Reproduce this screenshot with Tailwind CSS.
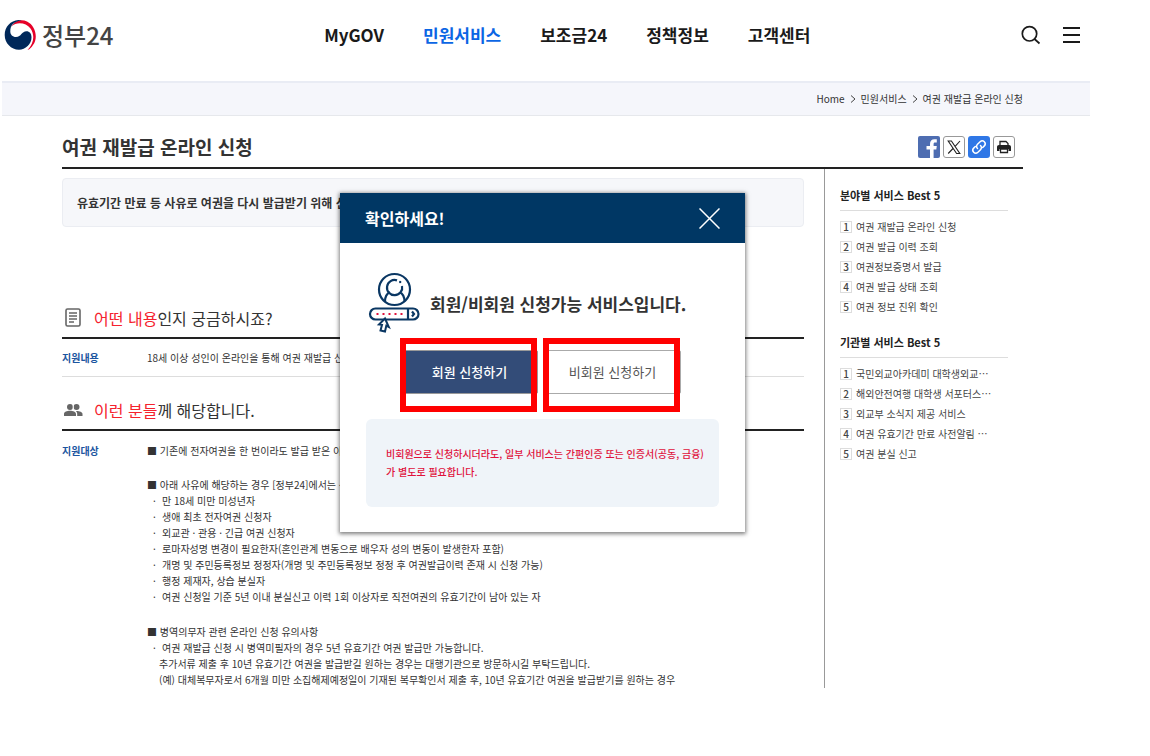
<!DOCTYPE html>
<html lang="ko">
<head>
    <meta charset="UTF-8">
    <meta name="viewport" content="width=device-width, initial-scale=1.0">
    <title>여권 재발급 온라인 신청 | 정부24</title>
    <script src="https://cdn.jsdelivr.net/npm/@tailwindcss/browser@4"></script>
</head>
<body class="bg-white text-[#333] font-['Noto_Sans_CJK_KR',sans-serif] text-[10px] leading-4">
    <div class="relative ml-[2px] mr-[60px]">
        <!-- header -->
        <header class="flex items-center justify-between h-[81px] pb-[11px] pl-[2px] pr-[9px]">
            <a href="#" class="flex items-center gap-[6px]">
                <svg class="w-8 h-8" viewBox="0 0 32 32" aria-hidden="true">
                    <path d="M7.500 7.500C11 1 18 0 23 2.500C31.500 6.500 34.500 19 29 26C27.500 28.500 26 30 23.500 31C30 24.500 31 16 26.500 9.500C22 3.500 12.500 2.500 7.500 7.500Z" fill="#e60028"/>
                    <path d="M14.500 1C6.500 1.500 0.700 8 0.700 16C0.700 24 7 30.700 15 30.700C21.500 30.700 27.500 25 27.500 18.500C27.500 14.500 25.500 12.300 22.500 12.300C17.500 12.300 17.500 18 12 18C8.500 18 6.300 15.500 6.300 12.500C6.300 6.500 9.500 2.500 18 1.300C17 1 16 1 14.500 1Z" fill="#00285a"/>
                </svg>
                <span class="text-[24px] leading-8 font-medium text-[#444]">정부24</span>
            </a>
            <nav class="flex gap-[39px] text-[17px] leading-6 font-bold text-[#1a1a1a]">
                <a href="#">MyGOV</a>
                <a href="#" class="text-[#0b66e4]">민원서비스</a>
                <a href="#">보조금24</a>
                <a href="#">정책정보</a>
                <a href="#">고객센터</a>
            </nav>
            <div class="flex items-center gap-[22px]">
                <button type="button" aria-label="검색">
                    <svg class="w-5 h-5" viewBox="0 0 20 20" fill="none" stroke="#1a1a1a" stroke-width="1.700"><circle cx="8.500" cy="8.800" r="7.200"/><path d="M13.500 14l5 4.500"/></svg>
                </button>
                <button type="button" aria-label="전체메뉴">
                    <svg class="w-[18px] h-[18px]" viewBox="0 0 18 18" fill="#1a1a1a"><path d="M0 1h17v2H0zM0 8h17v2H0zM0 15h17v2H0z"/></svg>
                </button>
            </div>
        </header>

        <!-- breadcrumb -->
        <div class="flex items-center justify-end gap-[5px] h-[35px] pr-[67px] bg-[#f5f6fb] border-t-2 border-b border-t-[#e9ecf4] border-b-[#e6e8ec]">
            <a href="#">Home</a>
            <svg class="w-[6px] h-2" viewBox="0 0 6 8" fill="none" stroke="#444"><path d="M1 0.500l4 3.500-4 3.500"/></svg>
            <a href="#">민원서비스</a>
            <svg class="w-[6px] h-2" viewBox="0 0 6 8" fill="none" stroke="#444"><path d="M1 0.500l4 3.500-4 3.500"/></svg>
            <a href="#">여권 재발급 온라인 신청</a>
        </div>

        <main class="pl-[60px] pr-[67px]">
            <div class="flex items-center justify-between h-[53px] pt-[10px] pr-2 border-b-2 border-[#222]">
                <h1 class="text-[19px] leading-6 font-bold">여권 재발급 온라인 신청</h1>
                <div class="flex gap-[3px]">
                    <button type="button" aria-label="페이스북" class="w-[22px] h-[22px] rounded-[2px] overflow-hidden bg-[#4e6db1]">
                        <svg class="w-full h-full" viewBox="0 0 22 22" fill="#fff"><path d="M12 22v-8.500H8.500V10H12V8c0-3.200 1.600-4.800 4.500-4.800h2.300v3.400h-1.600c-1.300 0-1.600.6-1.600 1.600V10h3.200l-.5 3.500h-2.700V22z"/></svg>
                    </button>
                    <button type="button" aria-label="X" class="w-[22px] h-[22px] rounded-[3px] border border-[#999]">
                        <svg class="w-full h-full" viewBox="0 0 20 20" fill="none" stroke="#222" stroke-width="1.100"><path d="M4.200 4h3.200l8.400 12.500h-3.200zM16 4l-5.300 5.800M9 11.500l-4.800 5"/></svg>
                    </button>
                    <button type="button" aria-label="링크 복사" class="w-[22px] h-[22px] rounded-[3px] bg-[#2f77e6]">
                        <svg class="w-full h-full" viewBox="0 0 22 22" fill="none" stroke="#fff" stroke-width="1.500" stroke-linecap="round"><path d="M9.500 12.500c-1.300-1.300-1.200-3 0-4.200l2.600-2.600c1.300-1.200 3-1.200 4.200 0s1.200 2.900 0 4.200l-1.600 1.600M12.500 9.500c1.300 1.300 1.200 3 0 4.200l-2.600 2.600c-1.300 1.200-3 1.200-4.200 0s-1.200-2.900 0-4.200l1.600-1.600"/></svg>
                    </button>
                    <button type="button" aria-label="인쇄" class="w-[22px] h-[22px] rounded-[3px] border border-[#999]">
                        <svg class="w-full h-full" viewBox="0 0 20 20"><path d="M6 8V4.500h6l2 2V8" fill="none" stroke="#222" stroke-width="1.300"/><path d="M5 8h10c1.200 0 2 .8 2 2v4h-2.500v-2h-9v2H3v-4c0-1.200.8-2 2-2z" fill="#222"/><path d="M6.500 12h7v3.500h-7z" fill="#fff" stroke="#222" stroke-width="1.300"/></svg>
                    </button>
                </div>
            </div>

            <div class="flex min-h-[518px]">
                <div class="flex-1 min-w-0 pr-5">
                    <p class="mt-[9px] h-[49px] px-[14px] flex items-center rounded border border-[#ebedf2] bg-[#f6f7fa] text-[12px] font-bold whitespace-nowrap overflow-hidden">유효기간 만료 등 사유로 여권을 다시 발급받기 위해 신</p>

                    <section class="mt-[72px]">
                        <h2 class="flex items-center gap-[10px] h-10 pl-[1px] border-b-2 border-[#222] text-[16px] leading-6">
                            <svg class="w-[21px] h-[22px]" viewBox="0 0 21 22" fill="none" stroke="#666" stroke-width="1.600"><rect x="3" y="2" width="14" height="17" rx="1.500"/><path d="M6 6h8M6 9h8M6 12h8M6 15h5" stroke-width="1.300"/></svg>
                            <span><span class="text-[#f5222d]">어떤 내용</span>인지 궁금하시죠?</span>
                        </h2>
                        <dl class="flex items-center h-[38px] border-b border-[#ddd]">
                            <dt class="w-[85px] shrink-0 font-bold text-[#1b55a0]">지원내용</dt>
                            <dd class="whitespace-nowrap">18세 이상 성인이 온라인을 통해 여권 재발급 신</dd>
                        </dl>
                    </section>

                    <section class="mt-[14px]">
                        <h2 class="flex items-center gap-[10px] h-10 pl-[1px] border-b-2 border-[#222] text-[16px] leading-6">
                            <svg class="w-[21px] h-[22px]" viewBox="0 0 21 22" fill="#666"><circle cx="7" cy="8" r="3"/><circle cx="13.500" cy="8" r="3"/><path d="M1 17v-2c0-2 3-3.200 6-3.200s6 1.200 6 3.200v2zM14.200 17v-2c0-1.200-.5-2.200-1.300-3 3.100-.2 6.600.9 6.600 3v2z"/><path d="M10.200 5v6" stroke="#fff"/></svg>
                            <span><span class="text-[#f5222d]">이런 분들</span>께 해당합니다.</span>
                        </h2>
                        <dl class="flex pt-3">
                            <dt class="w-[85px] shrink-0 font-bold text-[#1b55a0]">지원대상</dt>
                            <dd>
                                <p>■ 기존에 전자여권을 한 번이라도 발급 받은 이력</p>
                                <p class="mt-[18px]">■ 아래 사유에 해당하는 경우 [정부24]에서는 신</p>
                                <ul class="pl-[6px]">
                                    <li class="flex"><span class="w-[9px]">·</span>만 18세 미만 미성년자</li>
                                    <li class="flex"><span class="w-[9px]">·</span>생애 최초 전자여권 신청자</li>
                                    <li class="flex"><span class="w-[9px]">·</span>외교관 · 관용 · 긴급 여권 신청자</li>
                                    <li class="flex"><span class="w-[9px]">·</span>로마자성명 변경이 필요한자(혼인관계 변동으로 배우자 성의 변동이 발생한자 포함)</li>
                                    <li class="flex"><span class="w-[9px]">·</span>개명 및 주민등록정보 정정자(개명 및 주민등록정보 정정 후 여권발급이력 존재 시 신청 가능)</li>
                                    <li class="flex"><span class="w-[9px]">·</span>행정 제재자, 상습 분실자</li>
                                    <li class="flex"><span class="w-[9px]">·</span>여권 신청일 기준 5년 이내 분실신고 이력 1회 이상자로 직전여권의 유효기간이 남아 있는 자</li>
                                </ul>
                                <p class="mt-[19px]">■ 병역의무자 관련 온라인 신청 유의사항</p>
                                <ul class="pl-[6px]">
                                    <li class="flex"><span class="w-[9px]">·</span>여권 재발급 신청 시 병역미필자의 경우 5년 유효기간 여권 발급만 가능합니다.</li>
                                </ul>
                                <p class="pl-3">추가서류 제출 후 10년 유효기간 여권을 발급받길 원하는 경우는 대행기관으로 방문하시길 부탁드립니다.</p>
                                <p class="pl-3">(예) 대체복무자로서 6개월 미만 소집해제예정일이 기재된 복무확인서 제출 후, 10년 유효기간 여권을 발급받기를 원하는 경우</p>
                            </dd>
                        </dl>
                    </section>
                </div>

                <!-- sidebar -->
                <aside class="w-[199px] shrink-0 px-[15px] pt-[17px] border-l border-[#999] text-[#444]">
                    <h2 class="h-[25px] text-[11px] leading-[18px] font-bold text-[#222] border-b border-[#ddd]">분야별 서비스 Best 5</h2>
                    <ol class="mt-[6px] leading-5">
                        <li class="flex items-center gap-1"><span class="w-3 h-3 border border-[#ddd] leading-[10px] text-center font-medium">1</span><a href="#">여권 재발급 온라인 신청</a></li>
                        <li class="flex items-center gap-1"><span class="w-3 h-3 border border-[#ddd] leading-[10px] text-center font-medium">2</span><a href="#">여권 발급 이력 조회</a></li>
                        <li class="flex items-center gap-1"><span class="w-3 h-3 border border-[#ddd] leading-[10px] text-center font-medium">3</span><a href="#">여권정보증명서 발급</a></li>
                        <li class="flex items-center gap-1"><span class="w-3 h-3 border border-[#ddd] leading-[10px] text-center font-medium">4</span><a href="#">여권 발급 상태 조회</a></li>
                        <li class="flex items-center gap-1"><span class="w-3 h-3 border border-[#ddd] leading-[10px] text-center font-medium">5</span><a href="#">여권 정보 진위 확인</a></li>
                    </ol>
                    <h2 class="mt-4 h-[25px] text-[11px] leading-[18px] font-bold text-[#222] border-b border-[#ddd]">기관별 서비스 Best 5</h2>
                    <ol class="mt-[6px] leading-5">
                        <li class="flex items-center gap-1"><span class="w-3 h-3 border border-[#ddd] leading-[10px] text-center font-medium">1</span><a href="#">국민외교아카데미 대학생외교⋯</a></li>
                        <li class="flex items-center gap-1"><span class="w-3 h-3 border border-[#ddd] leading-[10px] text-center font-medium">2</span><a href="#">해외안전여행 대학생 서포터스⋯</a></li>
                        <li class="flex items-center gap-1"><span class="w-3 h-3 border border-[#ddd] leading-[10px] text-center font-medium">3</span><a href="#">외교부 소식지 제공 서비스</a></li>
                        <li class="flex items-center gap-1"><span class="w-3 h-3 border border-[#ddd] leading-[10px] text-center font-medium">4</span><a href="#">여권 유효기간 만료 사전알림 ⋯</a></li>
                        <li class="flex items-center gap-1"><span class="w-3 h-3 border border-[#ddd] leading-[10px] text-center font-medium">5</span><a href="#">여권 분실 신고</a></li>
                    </ol>
                </aside>
            </div>
        </main>

        <!-- popup -->
        <div role="dialog" aria-labelledby="popupTitle" class="absolute top-[193px] left-[338px] w-[405px] bg-white shadow-[0_1px_4px_1px_rgba(0,0,0,0.5)]">
            <div class="flex items-center justify-between h-[50px] px-[25px] bg-[#003764] text-white">
                <h2 id="popupTitle" class="text-[16px] leading-6 font-bold">확인하세요!</h2>
                <button type="button" aria-label="닫기">
                    <svg class="w-[21px] h-[21px]" viewBox="0 0 21 21" stroke="#fff" stroke-width="1.500"><path d="M0.500 0.500l20 20M20.500 0.500l-20 20"/></svg>
                </button>
            </div>
            <div class="px-[26px] pt-7 pb-[25px]">
                <div class="flex items-center gap-[9px] pl-[2px]">
                    <svg class="w-[53px] h-[62px]" viewBox="0 0 53 62" fill="none" stroke="#0a3763" stroke-width="2.200">
                        <circle cx="26.500" cy="18.500" r="15.500"/>
                        <path d="M29 9.400a7.600 7.600 0 1 0 5 5.500M17 30.500c0-5 2-8 5-9.500M36.500 30.500c0-5-2-8-5-9.500"/>
                        <path d="M31.200 11h2"/>
                        <rect x="2" y="37.500" width="48.500" height="11" rx="5.500"/>
                        <path d="M40 37.500v11M44 40.500l2 2.500-2 2.500"/>
                        <path d="M8.500 43h27" stroke="#e0123c" stroke-width="2" stroke-dasharray="2 4"/>
                        <path d="M17 47.500l-6 6 3 .3-1.500 5.700 4.500 1 1.300-5.800 2.500 1.300z" fill="#fff" stroke-width="2"/>
                    </svg>
                    <p class="pt-1 text-[17px] leading-6 font-bold whitespace-nowrap">회원/비회원 신청가능 서비스입니다.</p>
                </div>
                <div class="flex gap-[6px] mt-[17px] pl-[35px] text-[13px]">
                    <div class="relative">
                        <button type="button" class="w-[137px] h-11 rounded-[2px] border border-[#999] bg-[#334c78] text-white font-medium">회원 신청하기</button>
                        <div class="absolute -top-3 -left-px w-[137px] h-[74px] border-6 border-[#ff0000] pointer-events-none"></div>
                    </div>
                    <div class="relative">
                        <button type="button" class="w-[137px] h-11 rounded-[2px] border border-[#aaa] bg-white text-[#555]">비회원 신청하기</button>
                        <div class="absolute -top-3 -left-px w-[137px] h-[74px] border-6 border-[#ff0000] pointer-events-none"></div>
                    </div>
                </div>
                <div class="mt-[25px] min-h-[88px] rounded-md bg-[#eff4f9] px-5 pt-[26px] leading-[18px] font-medium text-[#e0123c]">
                    <p class="whitespace-nowrap">비회원으로 신청하시더라도, 일부 서비스는 간편인증 또는 인증서(공동, 금융)<br>가 별도로 필요합니다.</p>
                </div>
            </div>
        </div>
    </div>
</body>
</html>
